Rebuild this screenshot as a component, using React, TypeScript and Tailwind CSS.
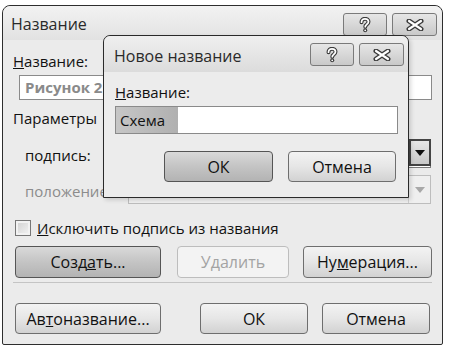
import React from 'react'

const font = "font-['Open_Sans','Noto_Sans',sans-serif]"

function HelpIcon() {
  return (
    <svg width="14" height="16" viewBox="0 0 14 16">
      <path d="M3.5 5.2C3.5 3 5 1.8 7 1.8s3.5 1.2 3.5 3c0 1.6-1 2.2-2 2.9-.8.5-1.2 1-1.2 2" fill="none" stroke="#3a3a3a" strokeWidth="4" strokeLinecap="round" />
      <circle cx="7.2" cy="13.3" r="2" fill="#3a3a3a" />
      <path d="M3.5 5.2C3.5 3 5 1.8 7 1.8s3.5 1.2 3.5 3c0 1.6-1 2.2-2 2.9-.8.5-1.2 1-1.2 2" fill="none" stroke="#fff" strokeWidth="1.8" strokeLinecap="round" />
      <circle cx="7.2" cy="13.3" r="0.9" fill="#fff" />
    </svg>
  )
}

function CloseIcon() {
  return (
    <svg width="18" height="12" viewBox="0 0 18 12">
      <path d="M3 2l12 8M15 2L3 10" stroke="#3a3a3a" strokeWidth="5" strokeLinecap="round" />
      <path d="M3 2l12 8M15 2L3 10" stroke="#fff" strokeWidth="2.2" strokeLinecap="round" />
    </svg>
  )
}

function CaptionButtons({ className = '' }: { className?: string }) {
  return (
    <div className={`flex gap-[5px] ${className}`}>
      <div className="w-[44px] h-[23px] border border-[#7a7a7a] rounded-[3px] bg-gradient-to-b from-[#e6e6e6] to-[#c9c9c9] flex items-center justify-center">
        <HelpIcon />
      </div>
      <div className="w-[45px] h-[23px] border border-[#7a7a7a] rounded-[3px] bg-gradient-to-b from-[#e6e6e6] to-[#c9c9c9] flex items-center justify-center">
        <CloseIcon />
      </div>
    </div>
  )
}

function Btn({ children, w, h = 'h-[31px]', kind = 'normal', className = '' }: {
  children: React.ReactNode
  w: string
  h?: string
  kind?: 'normal' | 'focus' | 'disabled'
  className?: string
}) {
  const look =
    kind === 'focus'
      ? 'border-[#555] bg-gradient-to-b from-[#d9d9d9] via-[#c4c4c4] to-[#b3b3b3] text-[#111]'
      : kind === 'disabled'
      ? 'border-[#bdbdbd] bg-[#f3f3f3] text-[#a3a3a3]'
      : 'border-[#6e6e6e] bg-gradient-to-b from-[#f3f3f3] via-[#e6e6e6] to-[#d2d2d2] text-[#111]'
  return (
    <div className={`${w} ${h} border rounded-[4px] flex items-center justify-center text-[16px] ${look} ${className}`}>
      {children}
    </div>
  )
}

function Combo({ disabled = false }: { disabled?: boolean }) {
  return (
    <div className={`w-[303px] h-[29px] border flex justify-end ${disabled ? 'border-[#bdbdbd] bg-[#efefef]' : 'border-[#7a7a7a] bg-white'}`}>
      <div className={`w-[22px] h-full flex items-center justify-center ${disabled ? 'border-l border-[#cfcfcf]' : 'border-2 border-[#444] -m-px bg-gradient-to-b from-[#e8e8e8] to-[#c8c8c8]'}`}>
        <svg width="10" height="6" viewBox="0 0 10 6">
          <path d="M0 0h10L5 6z" fill={disabled ? '#a8a8a8' : '#111'} />
        </svg>
      </div>
    </div>
  )
}

export default function App() {
  return (
    <div className={`w-[450px] h-[352px] bg-white relative overflow-hidden ${font}`}>
      {/* main dialog */}
      <div className="ml-[2px] mt-[5px] w-[441px] h-[340px] border border-[#2e2e2e] rounded-t-[8px] rounded-b-[2px] bg-[#ebebeb] flex flex-col">
        <div className="h-[34px] flex items-start rounded-t-[8px] bg-gradient-to-b from-[#f2f2f2] to-[#e2e2e2]">
          <div className="ml-[8px] mt-[6px] text-[16px] text-[#2a2a2a]">Название</div>
          <CaptionButtons className="ml-auto mr-[5px] mt-[7px]" />
        </div>

        <div className="pl-[10px] text-[15px] text-[#111] flex flex-col">
          <div className="mt-[11px] h-[20px] leading-[20px]"><u>Н</u>азвание:</div>
          <div className="mt-[4px] ml-[6px] w-[413px] h-[25px] border border-[#8a8a8a] bg-white flex items-center pl-[5px] font-bold text-[#8a8a8a]">Рисунок 2</div>
          <div className="mt-[8px] h-[20px] leading-[20px]">Параметры</div>
          <div className="mt-[11px] flex items-center">
            <div className="ml-[12px] w-[103px] mt-[4px]">по<u>д</u>пись:</div>
            <Combo />
          </div>
          <div className="mt-[7px] flex items-center">
            <div className="ml-[12px] w-[103px] mt-[4px] text-[#8c8c8c]">положение:</div>
            <Combo disabled />
          </div>
          <div className="mt-[15px] flex items-center h-[18px]">
            <div className="ml-[2px] w-[16px] h-[16px] border border-[#777] bg-gradient-to-br from-[#d0d0d0] to-[#f4f4f4] shadow-[inset_0_0_0_2px_#f2f2f2]" />
            <div className="ml-[6px] text-[15px]"><u>И</u>сключить подпись из названия</div>
          </div>
          <div className="mt-[9px] flex">
            <Btn w="w-[146px]" h="h-[32px]" kind="focus" className="ml-[2px]">Созд<u>а</u>ть...</Btn>
            <Btn w="w-[112px]" h="h-[32px]" kind="disabled" className="ml-[16px]">Удалить</Btn>
            <Btn w="w-[129px]" h="h-[32px]" className="ml-[14px]">Ну<u>м</u>ерация...</Btn>
          </div>
          <div className="mt-[4px] mr-[10px] h-[2px] border-t border-[#c4c4c4] border-b-white" />
          <div className="mt-[19px] flex">
            <Btn w="w-[146px]" className="ml-[2px]">Ав<u>т</u>оназвание...</Btn>
            <Btn w="w-[108px]" className="ml-[39px]">ОК</Btn>
            <Btn w="w-[108px]" className="ml-[14px]">Отмена</Btn>
          </div>
        </div>
      </div>

      {/* overlapping dialog */}
      <div className="absolute left-[103px] top-[35px] w-[306px] h-[163px] border border-[#2a2a2a] rounded-t-[7px] bg-[#ececec] flex flex-col shadow-[2px_2px_4px_rgba(0,0,0,0.15)]">
        <div className="h-[36px] flex items-start rounded-t-[7px] bg-gradient-to-b from-[#efefef] to-[#dcdcdc]">
          <div className="ml-[10px] mt-[8px] text-[16px] text-[#2a2a2a]">Новое название</div>
          <CaptionButtons className="ml-auto mr-[4px] mt-[7px]" />
        </div>
        <div className="pl-[11px] text-[15px] text-[#111] flex flex-col">
          <div className="mt-[10px] h-[20px] leading-[20px]"><u>Н</u>азвание:</div>
          <div className="mt-[4px] w-[283px] h-[28px] border border-[#8a8a8a] bg-white flex items-center">
            <div className="h-full w-[62px] bg-gradient-to-r from-[#c6c6c6] to-[#b0b0b0] pl-[4px] flex items-center text-[15px] text-[#111]">Схема</div>
          </div>
          <div className="mt-[17px] flex">
            <Btn w="w-[109px]" h="h-[31px]" kind="focus" className="ml-[49px]">ОК</Btn>
            <Btn w="w-[108px]" h="h-[31px]" className="ml-[15px]">Отмена</Btn>
          </div>
        </div>
      </div>
    </div>
  )
}
